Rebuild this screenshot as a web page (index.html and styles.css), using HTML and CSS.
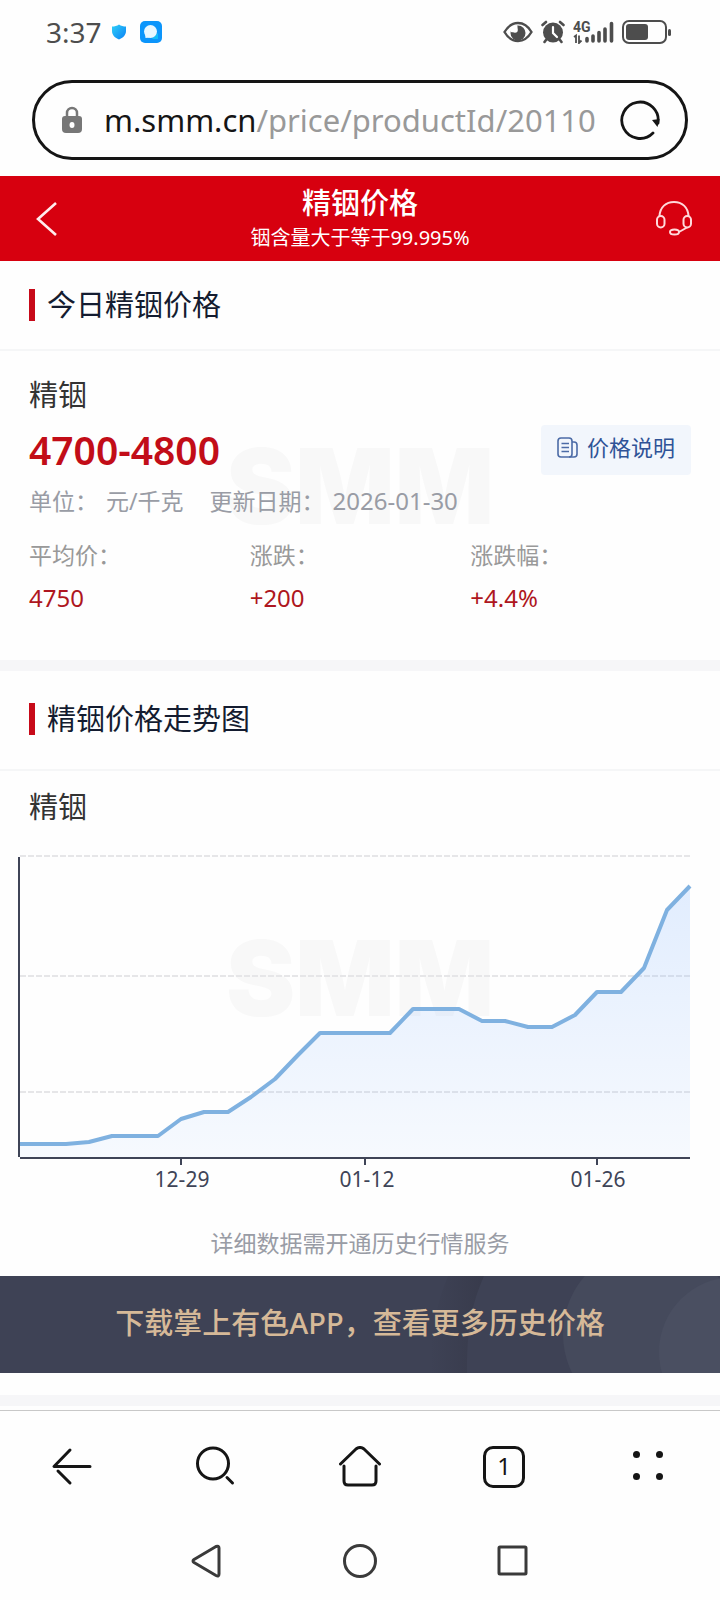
FILE: index.html
```
<!DOCTYPE html>
<html lang="zh-CN">
<head>
    <meta charset="UTF-8">
    <meta name="viewport" content="width=device-width, initial-scale=1.0">
    <title>精铟价格</title>
    <link rel="stylesheet" href="styles.css">
</head>
<body>

    <!-- Phone status bar -->
    <div class="status">
        <span class="time">3:37</span>
        <svg class="shield" width="16" height="18" viewBox="0 0 16 18">
            <defs>
                <linearGradient id="blue" x1="0" y1="0" x2="1" y2="1">
                    <stop offset="0" stop-color="#2fd0f8"/>
                    <stop offset="1" stop-color="#0a80f5"/>
                </linearGradient>
            </defs>
            <path d="M8 1.5 C10 3 12.5 3.5 15 3.5 V8 C15 12 12 15 8 16.5 C4 15 1 12 1 8 V3.5 C3.5 3.5 6 3 8 1.5Z" fill="url(#blue)"/>
        </svg>
        <svg width="22" height="22" viewBox="0 0 22 22">
            <rect width="22" height="22" rx="5" fill="#0c95fb"/>
            <path d="M12 17.5 L18 12 V18 H13Z" fill="#15bdf8"/>
            <circle cx="10.5" cy="10.5" r="6.5" fill="#e9f7ff"/>
            <path d="M5 13 L5.5 17 L10 16.5Z" fill="#e9f7ff"/>
        </svg>

        <div class="status-right">
            <svg width="30" height="22" viewBox="0 0 30 22">
                <path d="M1.5 11 C5 5 10 2 15 2 C20 2 25 5 28.5 11 C25 17 20 20 15 20 C10 20 5 17 1.5 11Z" fill="none" stroke="#4d4d4d" stroke-width="2.4"/>
                <circle cx="15" cy="12" r="7.5" fill="#4d4d4d"/>
                <path d="M8 11 A5 5 0 0 0 14 4 L8 6Z" fill="#fff"/>
                <circle cx="12" cy="9" r="2.8" fill="#fff"/>
            </svg>
            <svg width="24" height="24" viewBox="0 0 24 24">
                <circle cx="12" cy="12.5" r="10" fill="#4d4d4d"/>
                <path d="M1.5 5 L5 2 M22.5 5 L19 2 M5 20 L3.5 22 M19 20 L20.5 22" stroke="#4d4d4d" stroke-width="2.6" stroke-linecap="round"/>
                <path d="M12 7 V13 L16 17" fill="none" stroke="#fff" stroke-width="2.2" stroke-linecap="round"/>
            </svg>
            <svg width="41" height="24" viewBox="0 0 41 24">
                <text x="0" y="12" class="net">4G</text>
                <path d="M1 17 L3 15.5 V23 M6 15.5 V23 L8.5 20.5" fill="none" stroke="#4d4d4d" stroke-width="1.8"/>
                <path d="M14 18.5 V21 M20 16 V21 M26 12.5 V21 M32 9 V21 M38.5 3.5 V21" stroke="#4d4d4d" stroke-width="3.6" stroke-linecap="round"/>
            </svg>
            <svg width="50" height="26" viewBox="0 0 50 26">
                <rect x="1" y="2" width="43" height="22" rx="6" fill="none" stroke="#4d4d4d" stroke-width="2"/>
                <rect x="4" y="5" width="22" height="16" rx="3" fill="#4d4d4d"/>
                <rect x="46" y="10" width="3" height="7" rx="1.5" fill="#4d4d4d"/>
            </svg>
        </div>
    </div>

    <!-- Address bar -->
    <div class="address-wrap">
        <div class="address">
            <svg width="20" height="28" viewBox="0 0 20 28">
                <path d="M5 12 V7 A5 5 0 0 1 15 7 V12" fill="none" stroke="#777" stroke-width="2.5"/>
                <path d="M3 10 H17 A3 3 0 0 1 20 13 V23 A4 4 0 0 1 16 27 H4 A4 4 0 0 1 0 23 V13 A3 3 0 0 1 3 10Z" fill="#777"/>
                <ellipse cx="10" cy="19" rx="2.5" ry="3" fill="#fff"/>
            </svg>
            <div class="url"><b>m.smm.cn</b>/price/productId/20110</div>
            <button aria-label="刷新">
                <svg width="42" height="42" viewBox="0 0 42 42">
                    <path d="M34 34 A18.2 18.2 0 1 1 39 24" fill="none" stroke="#151515" stroke-width="2.8" stroke-linecap="round"/>
                    <path d="M33 21 L40.5 20 L38.5 28Z" fill="#151515"/>
                </svg>
            </button>
        </div>
    </div>

    <!-- Page header -->
    <header class="top">
        <a href="#" aria-label="返回">
            <svg width="24" height="36" viewBox="0 0 24 36">
                <path d="M21 3 L3 19 L21 35" fill="none" stroke="#ffeced" stroke-width="2.6"/>
            </svg>
        </a>
        <div class="top-title">
            <h1>精铟价格</h1>
            <p>铟含量大于等于99.995%</p>
        </div>
        <a href="#" aria-label="客服">
            <svg width="36" height="38" viewBox="0 0 36 38" fill="none" stroke="#ffd9db" stroke-width="2">
                <path d="M3.5 17 C4 8 10 3 18 3 C26 3 32 8 32.5 17"/>
                <rect x="1" y="17" width="7.5" height="11.5" rx="3.75"/>
                <rect x="27.5" y="17" width="7.5" height="11.5" rx="3.75"/>
                <path d="M31 28.5 L23 33"/>
                <ellipse cx="18.5" cy="33" rx="4.5" ry="2.5"/>
            </svg>
        </a>
    </header>

    <main>
        <section class="block">
            <h2>今日精铟价格</h2>
            <div class="price-card">
                <div class="watermark" aria-hidden="true">SMM</div>
                <div class="name">精铟</div>
                <div class="price-row">
                    <span class="price">4700-4800</span>
                    <button class="explain">
                        <svg width="22" height="22" viewBox="0 0 22 22" fill="none" stroke="#4c6ba6" stroke-width="1.6">
                            <rect x="2" y="2" width="14" height="19" rx="3"/>
                            <path d="M16 6 H18 Q21 6 21 9 V18 Q21 21 18 21 H13 M5.5 7.5 H13 M5.5 11.5 H13 M5.5 15.5 H13"/>
                        </svg>
                        价格说明
                    </button>
                </div>
                <div class="meta">
                    <span>单位：</span><span>元/千克</span>
                    <span class="date-label">更新日期：</span><span class="date">2026-01-30</span>
                </div>
                <dl class="stats">
                    <div><dt>平均价：</dt><dd>4750</dd></div>
                    <div><dt>涨跌：</dt><dd>+200</dd></div>
                    <div><dt>涨跌幅：</dt><dd>+4.4%</dd></div>
                </dl>
            </div>
        </section>

        <section class="block trend">
            <h2>精铟价格走势图</h2>
            <div class="name">精铟</div>
            <div class="chart">
                <div class="watermark" aria-hidden="true">SMM</div>
                <svg viewBox="0 0 720 360">
                    <defs>
                        <linearGradient id="area" x1="0" y1="0" x2="0" y2="1">
                            <stop offset="0" stop-color="#7cb0ff" stop-opacity="0.22"/>
                            <stop offset="1" stop-color="#7cb0ff" stop-opacity="0.06"/>
                        </linearGradient>
                    </defs>
                    <path d="M20 16 H690 M20 136 H690 M20 252 H690" stroke="#e6e6e8" stroke-width="2" stroke-dasharray="6 2"/>
                    <polygon fill="url(#area)" points="20,317 20,304 66,304 89,302 112,296 158,296 181,279 204,272 228,272 251,257 275,239 298,215 320,193 390,193 413,169 459,169 482,181 505,181 528,187 552,187 575,175 597,152 621,152 644,128 667,70 690,46 690,317"/>
                    <polyline fill="none" stroke="#7fb1e0" stroke-width="4" stroke-linejoin="round" points="20,304 66,304 89,302 112,296 158,296 181,279 204,272 228,272 251,257 275,239 298,215 320,193 390,193 413,169 459,169 482,181 505,181 528,187 552,187 575,175 597,152 621,152 644,128 667,70 690,46"/>
                    <path d="M19 17 V317 M20 318 H690 M181 318 V325 M365 318 V325 M597 318 V325" fill="none" stroke="#3f4457" stroke-width="2"/>
                    <g class="dates">
                        <text x="182" y="347">12-29</text>
                        <text x="367" y="347">01-12</text>
                        <text x="598" y="347">01-26</text>
                    </g>
                </svg>
            </div>
            <p class="note">详细数据需开通历史行情服务</p>
            <a href="#" class="download">
                <svg class="download-bg" width="290" height="97" viewBox="0 0 290 97">
                    <defs>
                        <linearGradient id="shade">
                            <stop offset="0" stop-color="#383b4c" stop-opacity="0"/>
                            <stop offset="1" stop-color="#383b4c"/>
                        </linearGradient>
                    </defs>
                    <path d="M18 0 H54 C42 28 37 50 37 97 H0 C0 60 6 28 18 0Z" fill="url(#shade)"/>
                    <circle cx="221" cy="58" r="88" fill="#454a5c"/>
                    <circle cx="304" cy="76" r="75" fill="#4a4f61"/>
                </svg>
                <span>下载掌上有色APP，查看更多历史价格</span>
            </a>
        </section>
    </main>

    <!-- Browser toolbar -->
    <nav class="toolbar">
        <button aria-label="后退">
            <svg width="42" height="42" viewBox="0 0 42 42">
                <path d="M19 4 L3 20.5 H39 M7 25 L19 37"/>
            </svg>
        </button>
        <button aria-label="搜索">
            <svg width="42" height="42" viewBox="0 0 42 42">
                <circle cx="18" cy="17.5" r="15.5"/>
                <path d="M32 31.5 L37.5 37"/>
            </svg>
        </button>
        <button aria-label="主页">
            <svg width="42" height="42" viewBox="0 0 42 42">
                <path d="M1.5 18 L17 3 Q21 0 25 3 L40.5 18 M5 20 V35 Q5 39 9 39 H33 Q37 39 37 35 V20"/>
            </svg>
        </button>
        <button aria-label="标签页"><span class="tabs">1</span></button>
        <button aria-label="菜单">
            <svg class="dots" width="42" height="42" viewBox="0 0 42 42">
                <circle cx="9.5" cy="8.5" r="3.5"/>
                <circle cx="32.5" cy="8.5" r="3.5"/>
                <circle cx="9.5" cy="30.5" r="3.5"/>
                <circle cx="32.5" cy="30.5" r="3.5"/>
            </svg>
        </button>
    </nav>

    <!-- System keys -->
    <nav class="system">
        <button aria-label="返回">
            <svg width="34" height="34" viewBox="0 0 34 34"><path d="M4 15.5 L26 2.5 Q29 1.5 29 4 V30 Q29 33 26 31.5 L4 18.5 Q2 17 4 15.5Z"/></svg>
        </button>
        <button aria-label="桌面">
            <svg width="34" height="34" viewBox="0 0 34 34"><circle cx="17" cy="17" r="15.5"/></svg>
        </button>
        <button aria-label="最近任务">
            <svg width="34" height="34" viewBox="0 0 34 34"><rect x="3" y="3" width="27" height="27" rx="1"/></svg>
        </button>
    </nav>

</body>
</html>
```

FILE: styles.css
```
* {
    box-sizing: border-box;
}

body {
    margin: 0;
    background: #fefefe;
    color: #333;
    font-family: "Noto Sans", "Noto Sans CJK SC", sans-serif;
    font-size: 23px;
    line-height: 32px;
}

h1, h2, p, dl, dd {
    margin: 0;
}

a {
    text-decoration: none;
}

button {
    padding: 0;
    border: none;
    background: none;
    font: inherit;
    cursor: pointer;
}

svg {
    display: block;
    flex: none;
}

/* Status bar */
.status {
    display: flex;
    align-items: center;
    height: 64px;
    padding: 0 48px 0 46px;
}

.time {
    color: #4d4d4d;
    font-size: 28px;
}

.shield {
    margin: 0 13px 0 9px;
}

.status-right {
    display: flex;
    align-items: center;
    gap: 8px;
    margin-left: auto;
}

.net {
    fill: #4d4d4d;
    font-family: Roboto, sans-serif;
    font-size: 14px;
    font-weight: 700;
}

/* Address bar */
.address-wrap {
    padding: 16px 32px;
}

.address {
    display: flex;
    align-items: center;
    height: 80px;
    padding: 0 24px 0 27px;
    border: 3px solid #151515;
    border-radius: 40px;
}

.url {
    flex: 1;
    min-width: 0;
    margin: 0 20px 0 22px;
    overflow: hidden;
    white-space: nowrap;
    color: #999;
    font-size: 31px;
    line-height: 44px;
}

.url b {
    color: #151515;
    font-weight: 400;
}

/* Page header */
.top {
    display: flex;
    align-items: center;
    justify-content: space-between;
    min-height: 85px;
    padding: 0 28px 2px 35px;
    background: #d7000f;
    color: #fff;
}

.top-title {
    padding-left: 5px;
    text-align: center;
}

.top h1 {
    font-size: 29px;
    font-weight: 500;
    line-height: 40px;
}

.top p {
    font-size: 20px;
    line-height: 30px;
}

/* Sections */
.block {
    border-bottom: 11px solid #f6f6f8;
}

h2 {
    display: flex;
    align-items: center;
    gap: 12px;
    padding: 27px 29px;
    border-bottom: 2px solid #f5f6f7;
    color: #141c30;
    font-size: 29px;
    font-weight: 400;
    line-height: 34px;
}

h2::before {
    content: "";
    width: 6px;
    height: 32px;
    background: #c70a19;
}

.name {
    padding: 0 29px;
    font-size: 29px;
    line-height: 40px;
}

.watermark {
    position: absolute;
    left: 0;
    right: 0;
    color: #f8f8f8;
    font-family: Inter, sans-serif;
    font-size: 104px;
    font-weight: 900;
    line-height: 78px;
    text-align: center;
}

/* Price card */
.price-card {
    position: relative;
    padding: 24px 0 46px;
}

.price-card .watermark {
    top: 96px;
}

.price-card > div:not(.watermark), .stats {
    position: relative;
}

.price-row {
    display: flex;
    align-items: center;
    justify-content: space-between;
    margin-top: 10px;
    padding: 0 29px;
}

.price {
    color: #c20d18;
    font-size: 39px;
    font-weight: 600;
    line-height: 50px;
}

.explain {
    display: flex;
    align-items: center;
    gap: 9px;
    height: 50px;
    padding: 0 16px 7px 15px;
    border-radius: 4px;
    background: #f2f6fc;
    color: #2f5397;
    font-size: 22px;
}

.meta {
    display: flex;
    gap: 8px;
    margin-top: 10px;
    padding: 0 29px;
    color: #999ca5;
}

.date-label {
    margin-left: 18px;
}

.date {
    font-size: 24px;
}

.stats {
    display: grid;
    grid-template-columns: repeat(3, 1fr);
    margin-top: 22px;
    padding: 0 29px;
    color: #999;
}

.stats dd {
    margin-top: 11px;
    color: #ae1620;
    font-size: 24px;
}

/* Trend chart */
.trend h2 {
    padding: 31px 29px 33px;
}

.trend .name {
    margin-top: 16px;
}

.chart {
    position: relative;
    margin-top: 13px;
}

.chart .watermark {
    top: 99px;
}

.chart svg {
    position: relative;
    width: 100%;
}

.dates {
    fill: #3f4457;
    font-size: 21px;
    text-anchor: middle;
}

.note {
    margin: 27px 0 17px;
    color: #999ca5;
    text-align: center;
}

.download {
    position: relative;
    display: flex;
    align-items: center;
    justify-content: center;
    min-height: 97px;
    margin-bottom: 22px;
    padding-bottom: 4px;
    background: #3e4255;
    color: #d6b998;
    font-size: 29px;
    font-weight: 500;
}

.download-bg {
    position: absolute;
    top: 0;
    right: 0;
}

.download span {
    position: relative;
}

/* Browser toolbar */
.toolbar {
    display: grid;
    grid-template-columns: repeat(5, 1fr);
    margin-top: 4px;
    padding: 35px 0 37px;
    border-top: 1px solid #c8c8c8;
}

.toolbar button {
    display: flex;
    justify-content: center;
}

.toolbar svg {
    fill: none;
    stroke: #151515;
    stroke-width: 3;
    stroke-linecap: round;
    stroke-linejoin: round;
}

.toolbar .dots {
    fill: #151515;
    stroke: none;
}

.tabs {
    width: 42px;
    height: 42px;
    border: 3px solid #151515;
    border-radius: 10px;
    color: #151515;
    font-size: 24px;
    line-height: 34px;
}

/* System keys */
.system {
    display: flex;
    justify-content: center;
    gap: 119px;
    padding: 19px 0 22px;
}

.system svg {
    fill: none;
    stroke: #3a3a3a;
    stroke-width: 3;
    stroke-linejoin: round;
}
```
